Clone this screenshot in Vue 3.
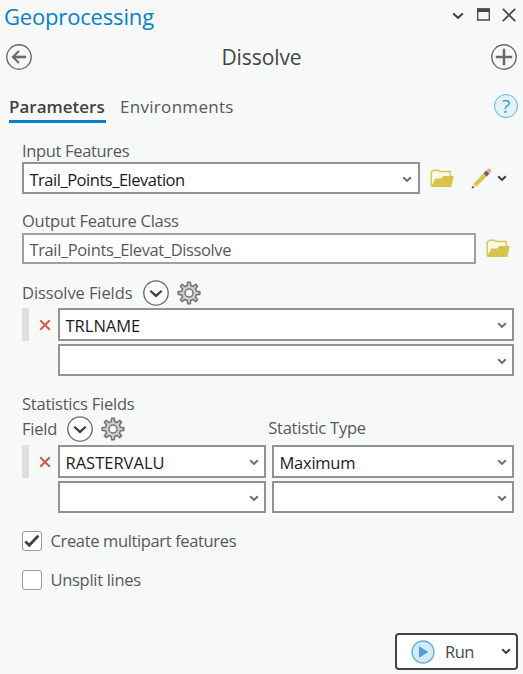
<script setup>
import { ref, h } from 'vue'

const multipart = ref(true)
const unsplit = ref(false)

// Eight-toothed gear outline
const gearPath = (() => {
  const pts = []
  for (let i = 0; i < 8; i++) {
    const base = i * 45 - 90
    for (const [off, r] of [[-13, 7.6], [-7, 10.9], [7, 10.9], [13, 7.6]]) {
      const a = ((base + off) * Math.PI) / 180
      pts.push(`${(12 + r * Math.cos(a)).toFixed(2)} ${(12 + r * Math.sin(a)).toFixed(2)}`)
    }
  }
  return `M${pts.join('L')}Z`
})()

const Chevron = () =>
  h('svg', { width: 10, height: 7, viewBox: '0 0 10 7', fill: 'none', stroke: 'currentColor', 'stroke-width': 2 }, [
    h('path', { d: 'M1.2 1.3L5 4.9L8.8 1.3' }),
  ])

const Folder = () =>
  h('svg', { width: 24, height: 19, viewBox: '0 0 24 19' }, [
    h('path', {
      d: 'M1.2 17V3.4Q1.2 2.3 2.4 2.3L3.4 1.2H8.6L9.8 2.5H20.3V7.5',
      fill: '#fbf8e8', stroke: '#d9c45a', 'stroke-width': 1.4,
    }),
    h('path', { d: 'M1 18L5.3 9.4H11.3L13.3 7H23.7L21.4 18Z', fill: '#d8c34c' }),
  ])

const Expand = () =>
  h('svg', { width: 26, height: 26, viewBox: '0 0 26 26', fill: 'none' }, [
    h('circle', { cx: 13, cy: 13, r: 12.2, stroke: '#686868', 'stroke-width': 1.3, fill: '#fafbfb' }),
    h('path', { d: 'M7.3 10.8L13 15.9L18.7 10.8', stroke: '#3c3c3c', 'stroke-width': 2.2 }),
  ])

const Gear = () =>
  h('svg', { width: 24, height: 24, viewBox: '0 0 24 24' }, [
    h('path', { d: gearPath, fill: '#cfcfcf', stroke: '#757575', 'stroke-width': 1.6, 'stroke-linejoin': 'round' }),
    h('circle', { cx: 12, cy: 12, r: 4, fill: '#f7f9f9', stroke: '#757575', 'stroke-width': 1.5 }),
  ])

const Remove = () =>
  h('svg', { width: 12, height: 12, viewBox: '0 0 12 12', stroke: '#cb6444', 'stroke-width': 2.2 }, [
    h('path', { d: 'M1.2 1.2L10.8 10.8M10.8 1.2L1.2 10.8' }),
  ])
</script>

<template>
  <main class="pane">
    <header class="titlebar">
      <h1 class="title">Geoprocessing</h1>
      <div class="window-tools">
        <svg class="collapse" width="12" height="8" viewBox="0 0 12 8" fill="none" stroke="#404040" stroke-width="2"><path d="M1.2 1.5L6 5.8L10.8 1.5" /></svg>
        <svg width="13" height="13" viewBox="0 0 13 13"><path d="M0.7 1H12.3V12H0.7Z" fill="none" stroke="#484848" stroke-width="1.3" /><path d="M0 .5H13V4H0Z" fill="#484848" /></svg>
        <svg width="14" height="14" viewBox="0 0 14 14" stroke="#484848" stroke-width="1.8"><path d="M.8 .8L13.2 13.2M13.2 .8L.8 13.2" /></svg>
      </div>
    </header>

    <div class="toolbar">
      <svg width="26" height="26" viewBox="0 0 26 26" fill="none" stroke="#696969">
        <circle cx="13" cy="13" r="12.2" stroke-width="1.4" />
        <path d="M20 13H7.5" stroke-width="2.6" />
        <path d="M12.9 6.9L6.9 13L12.9 19.1" stroke-width="2.1" />
      </svg>
      <h2 class="tool-name">Dissolve</h2>
      <svg width="26" height="26" viewBox="0 0 26 26" fill="none" stroke="#696969">
        <circle cx="13" cy="13" r="12.2" stroke-width="1.4" />
        <path d="M13 4.8V21.2M4.8 13H21.2" stroke-width="2.5" />
      </svg>
    </div>

    <nav class="tabs">
      <span class="tab active">Parameters</span>
      <span class="tab environments">Environments</span>
      <span class="help">?</span>
    </nav>

    <section class="form">
      <div class="label l-input">Input Features</div>
      <div class="row">
        <div class="field input-field"><span class="v-input">Trail_Points_Elevation</span><Chevron /></div>
        <Folder class="folder" />
        <svg class="pencil" width="21" height="21" viewBox="0 0 21 21">
          <path d="M.8 20.2L2.3 15.8L5.2 18.7Z" fill="#f2cba8" />
          <path d="M.6 20.4L1.5 17.9L3.1 19.5Z" fill="#444" />
          <path d="M2.5 15.5L13 5L16 8L5.5 18.5Z" fill="#d9c548" />
          <path d="M12.6 5.3L15.3 2.6L18.4 5.7L15.7 8.4Z" fill="#5c6065" />
          <path d="M15.4 2.5L17 .9Q18 .1 19.2 1L19.9 1.7Q20.8 2.8 19.9 4L18.4 5.6Z" fill="#e6a397" />
        </svg>
        <Chevron class="dark" />
      </div>

      <div class="label l-output">Output Feature Class</div>
      <div class="row output-row">
        <div class="field output-field"><span class="v-output">Trail_Points_Elevat_Dissolve</span></div>
        <Folder class="folder" />
      </div>

      <div class="heading">
        <span class="l-dissolve">Dissolve Fields</span><Expand /><Gear />
      </div>
      <div class="grid single">
        <i class="handle"></i><Remove />
        <div class="field first"><span class="v-caps">TRLNAME</span><Chevron /></div>
        <div class="field first"><span></span><Chevron /></div>
      </div>

      <div class="label l-stats">Statistics Fields</div>
      <div class="heading stat-heading">
        <span class="l-field">Field</span><Expand /><Gear />
        <span class="l-type">Statistic Type</span>
      </div>
      <div class="grid double">
        <i class="handle"></i><Remove />
        <div class="field first"><span class="v-caps">RASTERVALU</span><Chevron /></div>
        <div class="field statistic"><span class="v-max">Maximum</span><Chevron /></div>
        <div class="field first"><span></span><Chevron /></div>
        <div class="field statistic"><span></span><Chevron /></div>
      </div>

      <div class="check" @click="multipart = !multipart">
        <span class="box"><svg v-if="multipart" width="16" height="14" viewBox="0 0 16 14" fill="none" stroke="#3f3f3f" stroke-width="2.8"><path d="M1.3 7.4L5.3 11.2L14.4 1.6" /></svg></span>
        <span class="c-multi">Create multipart features</span>
      </div>
      <div class="check" @click="unsplit = !unsplit">
        <span class="box"><svg v-if="unsplit" width="16" height="14" viewBox="0 0 16 14" fill="none" stroke="#3f3f3f" stroke-width="2.8"><path d="M1.3 7.4L5.3 11.2L14.4 1.6" /></svg></span>
        <span class="c-unsplit">Unsplit lines</span>
      </div>
    </section>

    <footer class="footer">
      <button class="run">
        <svg width="24" height="24" viewBox="0 0 24 24"><circle cx="12" cy="12" r="11" fill="#d5eaf8" stroke="#68b0df" stroke-width="1.4" /><path d="M8 6.2L17.3 12L8 17.8Z" fill="#4a9fd7" /></svg>
        <span class="run-text">Run</span>
        <Chevron class="dark" />
      </button>
    </footer>
  </main>
</template>

<style>
body { margin: 0; background: #f7f9f9; }
</style>

<style scoped>
.pane {
  box-sizing: border-box;
  width: 523px;
  height: 674px;
  display: flex;
  flex-direction: column;
  overflow: hidden;
  background: #f7f9f9;
  color: #585858;
  font: 16.5px/20px "Open Sans", "Noto Sans", sans-serif;
  white-space: nowrap;
}
svg { display: block; flex: none; }
h1, h2 { margin: 0; font-weight: 400; }
.titlebar { height: 34px; display: flex; justify-content: space-between; padding: 0 7px 0 4px; }
.title { font-size: 22px; line-height: 33px; letter-spacing: -0.17px; color: #087fc8; }
.window-tools { display: flex; align-items: center; height: 29px; gap: 12px; }
.collapse { margin: 3px 1px 0 0; }
.toolbar { height: 46px; display: flex; align-items: center; justify-content: space-between; padding: 0 6px; }
.tool-name { font-size: 21px; line-height: 28px; letter-spacing: -0.08px; color: #454545; }
.tabs { height: 44px; display: flex; align-items: flex-start; padding: 0 5px 0 9px; box-sizing: border-box; }
.tab { height: 40px; line-height: 54px; font-size: 17px; }
.active { font-weight: 600; color: #414141; border-bottom: 3px solid #087fc8; width: 97px; }
.environments { margin-left: 14px; letter-spacing: 0.3px; }
.help {
  box-sizing: border-box; width: 24px; height: 24px; margin: 14px 0 0 auto;
  border: 1.5px solid #62b1e2; border-radius: 50%; background: #e4f2fb; color: #379bd8;
  font-size: 19px; font-weight: 400; line-height: 22px; text-align: center;
}

.form { padding: 17px 8px 0 22px; flex: 1; }
.label { height: 20px; }
.row { display: flex; align-items: center; margin-top: 1px; }
.output-row { margin-top: 2px; }
.field {
  box-sizing: border-box; height: 32px; border: 2px solid #929292; background: #fff; color: #1c1c1c;
  display: flex; align-items: center; justify-content: space-between; padding: 2px 6px 0 5.5px;
}
.input-field { padding-top: 3px; }
.field svg { color: #6c6c6c; }
.input-field { width: 398px; }
.output-field { width: 454px; height: 31px; border-color: #a0a0a0; color: #585858; padding-top: 3px; }
.folder { margin-left: 10px; }
.pencil { margin-left: 17px; }
.dark { color: #3c3c3c; }
.pencil + .dark { margin-left: 5px; }
.heading { display: flex; align-items: center; height: 27px; margin-top: 15px; }
.heading svg { margin-left: 11px; }
.heading svg + svg { margin-left: 8px; }
.stat-heading { height: 26px; margin-top: 2px; }
.stat-heading .l-field + svg { margin-left: 10px; }

/* Columns: drag handle, remove button, then the value fields */
.grid { display: grid; row-gap: 3px; align-items: center; }
.grid > svg { margin-left: 10px; }
.single { grid-template-columns: 7px 29px 456px; grid-template-rows: 33px 32px; margin-top: 2px; }
.double { grid-template-columns: 7px 29px 208px 6px 242px; grid-template-rows: 33px 32px; margin-top: 3px; }
.grid .field { height: 100%; padding-right: 5px; }
.grid .first { grid-column: 3; }
.grid .statistic { grid-column: 5; }
.handle { height: 33px; background: #dfdfdf; }

.check { display: flex; align-items: center; height: 21px; gap: 8.5px; margin-top: 18px; }
.double + .check { margin-top: 17px; }
.box { box-sizing: border-box; width: 20px; height: 20px; border: 1.5px solid #999; border-radius: 3px; background: #fff; display: grid; place-items: center; }
.footer { display: flex; justify-content: flex-end; padding: 0 5px 4px; }
.run {
  box-sizing: border-box; width: 123px; height: 37px; border: 2px solid #464646; border-radius: 4px; background: #fff;
  display: flex; align-items: center; padding: 0 5px 0 14px; color: #484848; font: inherit;
}
.run-text { margin-left: 10px; letter-spacing: -0.5px; }
.run .dark { margin-left: auto; }

.l-input { letter-spacing: -0.34px; }
.l-output { letter-spacing: -0.26px; margin-top: 17px; }
.l-dissolve { letter-spacing: -0.09px; }
.l-stats { letter-spacing: -0.22px; margin-top: 18px; }
.l-field { letter-spacing: -0.2px; }
.l-type { letter-spacing: -0.24px; margin: -3px 0 0 143px; }
.v-input { letter-spacing: -0.48px; }
.v-output { letter-spacing: -0.38px; }
.v-caps { letter-spacing: 0; }
.v-max { letter-spacing: -0.25px; }
.c-multi { letter-spacing: -0.36px; }
.c-unsplit { letter-spacing: -0.3px; }
</style>
